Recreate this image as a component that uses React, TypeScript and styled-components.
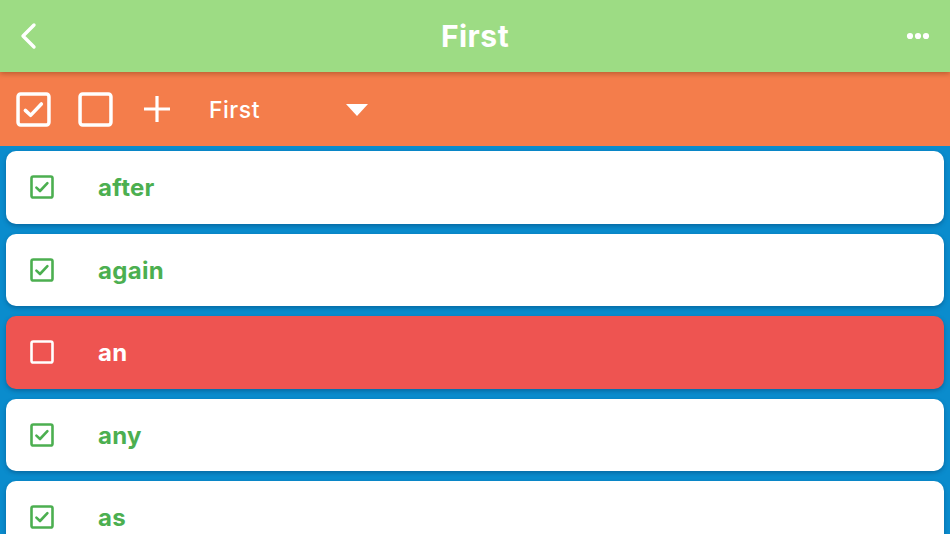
import React from "react";
import styled, { createGlobalStyle } from "styled-components";

const Global = createGlobalStyle`
  html, body { margin: 0; padding: 0; }
  body { background: #0a8ccd; font-family: Inter, "Noto Sans", sans-serif; overflow: hidden; }
`;

const Page = styled.div`
  width: 950px;
  height: 534px;
  display: flex;
  flex-direction: column;
  background: #0a8ccd;
  overflow: hidden;
`;

const Header = styled.header`
  height: 72px;
  flex-shrink: 0;
  background: #9ddc84;
  display: grid;
  grid-template-columns: 80px 1fr 80px;
  align-items: center;
  position: relative;
  z-index: 2;
  box-shadow: 0 2px 5px rgba(120, 60, 20, 0.45);
`;

const Title = styled.h1`
  margin: 0;
  text-align: center;
  color: #fff;
  font-size: 30px;
  font-weight: 700;
  letter-spacing: 0.5px;
`;

const HeaderBtn = styled.div<{ $align: "start" | "end" }>`
  display: flex;
  justify-content: ${(p) => (p.$align === "start" ? "flex-start" : "flex-end")};
  padding: ${(p) => (p.$align === "start" ? "0 0 0 19px" : "0 20px 0 0")};
  align-items: center;
`;

const Toolbar = styled.div`
  height: 74px;
  flex-shrink: 0;
  background: #f47d4b;
  display: flex;
  align-items: center;
  padding-left: 16px;
  position: relative;
  z-index: 1;
`;

const ToolIcon = styled.div<{ $mr: number }>`
  display: flex;
  align-items: center;
  margin-right: ${(p) => p.$mr}px;
`;

const Select = styled.div`
  display: flex;
  align-items: center;
  color: #fff;
  font-size: 23px;
  font-weight: 500;
  letter-spacing: 0.5px;
  padding-top: 2px;
`;

const SelectLabel = styled.span`
  width: 137px;
`;

const List = styled.div`
  display: flex;
  flex-direction: column;
  gap: 10px;
  padding: 5px 6px 0 6px;
`;

const Card = styled.div<{ $red?: boolean }>`
  height: 72.5px;
  flex-shrink: 0;
  border-radius: 10px;
  background: ${(p) => (p.$red ? "#ee5451" : "#ffffff")};
  display: flex;
  align-items: center;
  padding-left: 24px;
  box-shadow: 0 2px 4px rgba(0, 40, 80, 0.35);
`;

const Word = styled.span<{ $red?: boolean }>`
  margin-left: 44px;
  font-size: 24px;
  font-weight: 700;
  color: ${(p) => (p.$red ? "#ffffff" : "#4caf50")};
  letter-spacing: 0.3px;
  padding-top: 1px;
`;

const CheckBox = ({ checked, color, size, stroke }: { checked: boolean; color: string; size: number; stroke: number }) => (
  <svg width={size} height={size} viewBox="0 0 24 24" fill="none">
    <rect x={stroke / 2 + 0.2} y={stroke / 2 + 0.2} width={24 - stroke - 0.4} height={24 - stroke - 0.4} rx="1.8" stroke={color} strokeWidth={stroke} />
    {checked && (
      <path d="M6.4 12.6 L10 16 L17.4 8.2" stroke={color} strokeWidth={stroke} strokeLinecap="round" strokeLinejoin="round" />
    )}
  </svg>
);

const words: { w: string; red?: boolean }[] = [
  { w: "after" },
  { w: "again" },
  { w: "an", red: true },
  { w: "any" },
  { w: "as" },
];

export default function App() {
  return (
    <Page>
      <Global />
      <Header>
        <HeaderBtn $align="start">
          <svg width="20" height="28" viewBox="0 0 20 28" fill="none">
            <path d="M15 3 L4 14 L15 25" stroke="#fff" strokeWidth="3.4" strokeLinecap="round" strokeLinejoin="round" />
          </svg>
        </HeaderBtn>
        <Title>First</Title>
        <HeaderBtn $align="end">
          <svg width="24" height="8" viewBox="0 0 24 8">
            <circle cx="4" cy="4" r="3.1" fill="#fff" />
            <circle cx="12" cy="4" r="3.1" fill="#fff" />
            <circle cx="20" cy="4" r="3.1" fill="#fff" />
          </svg>
        </HeaderBtn>
      </Header>
      <Toolbar>
        <ToolIcon $mr={27}>
          <CheckBox checked color="#fff" size={35} stroke={2.4} />
        </ToolIcon>
        <ToolIcon $mr={29}>
          <CheckBox checked={false} color="#fff" size={35} stroke={2.4} />
        </ToolIcon>
        <ToolIcon $mr={37}>
          <svg width="30" height="30" viewBox="0 0 30 30">
            <path d="M15 2 V28 M2 15 H28" stroke="#fff" strokeWidth="3.2" />
          </svg>
        </ToolIcon>
        <Select>
          <SelectLabel>First</SelectLabel>
          <svg width="22" height="12" viewBox="0 0 22 12">
            <path d="M0 0 H22 L11 12 Z" fill="#fff" />
          </svg>
        </Select>
      </Toolbar>
      <List>
        {words.map((item) => (
          <Card key={item.w} $red={item.red}>
            <CheckBox checked={!item.red} color={item.red ? "#fff" : "#4caf50"} size={24} stroke={2.6} />
            <Word $red={item.red}>{item.w}</Word>
          </Card>
        ))}
      </List>
    </Page>
  );
}
